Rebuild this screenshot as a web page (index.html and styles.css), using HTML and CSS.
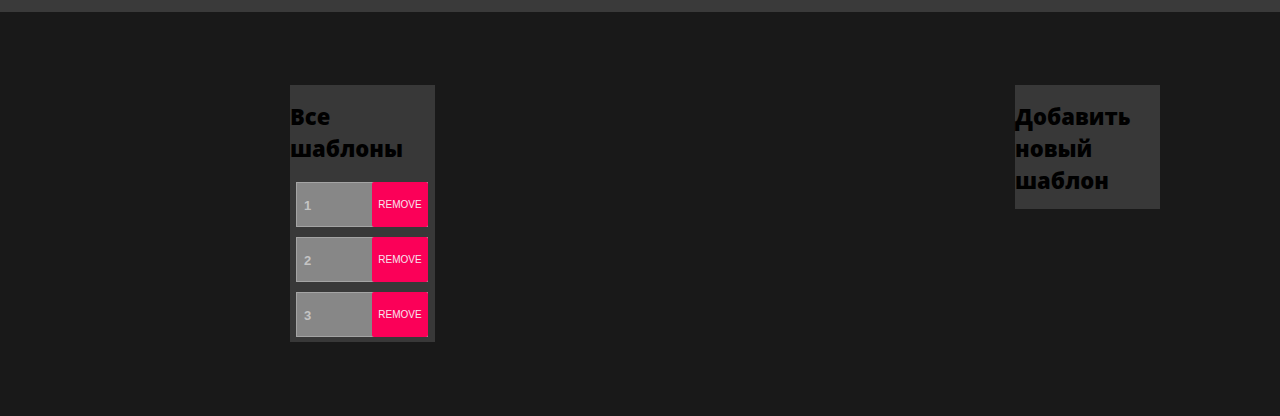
FILE: index.html
```html
<!DOCTYPE html>
<html lang="ru">
<head>
<meta charset="utf-8">
<title>Шаблоны</title>
<link rel="stylesheet" href="styles.css">
</head>
<body>
<div class="topbar"></div>
<main class="page">
  <section class="panel panel-list">
    <h2 class="panel-title">Все шаблоны</h2>
    <ul class="templates">
      <li class="template"><span class="template-name">1</span><button class="remove">REMOVE</button></li>
      <li class="template"><span class="template-name">2</span><button class="remove">REMOVE</button></li>
      <li class="template"><span class="template-name">3</span><button class="remove">REMOVE</button></li>
    </ul>
  </section>
  <section class="panel panel-add">
    <h2 class="panel-title">Добавить новый шаблон</h2>
  </section>
</main>
</body>
</html>
```
FILE: styles.css
```css
html, body {
  margin: 0;
  padding: 0;
  background: #191919;
  height: 100%;
}
body {
  font-family: "Open Sans", "DejaVu Sans", sans-serif;
}
.topbar {
  height: 12px;
  background: #3a3a3a;
}
.page {
  display: flex;
  justify-content: space-between;
  align-items: flex-start;
  padding: 73px 120px 0 290px;
}
.panel {
  width: 145px;
  background: #383838;
}
.panel-title {
  margin: 15px 0 0;
  font-size: 22px;
  line-height: 32px;
  font-weight: 800;
  color: #000;
}
.panel-add {
  padding-bottom: 13px;
}
.templates {
  list-style: none;
  margin: 18px 0 0;
  padding: 0 7px 5px 6px;
  display: flex;
  flex-direction: column;
  gap: 10px;
}
.template {
  display: flex;
  align-items: stretch;
  height: 45px;
  box-sizing: border-box;
  border: 1px solid #a4a4a4;
  background: #878787;
}
.template-name {
  flex: 1;
  display: flex;
  align-items: center;
  padding-left: 7px;
  padding-top: 2px;
  font-family: "Liberation Sans", Arial, sans-serif;
  font-weight: bold;
  font-size: 13px;
  color: #c4c4c4;
}
.remove {
  width: 56px;
  margin: -1px -1px -1px 0;
  border: none;
  border-radius: 2px;
  background: #fb0058;
  color: #f7e6ee;
  font-family: "Liberation Sans", Arial, sans-serif;
  font-size: 10px;
  padding: 0;
  cursor: pointer;
}
```
